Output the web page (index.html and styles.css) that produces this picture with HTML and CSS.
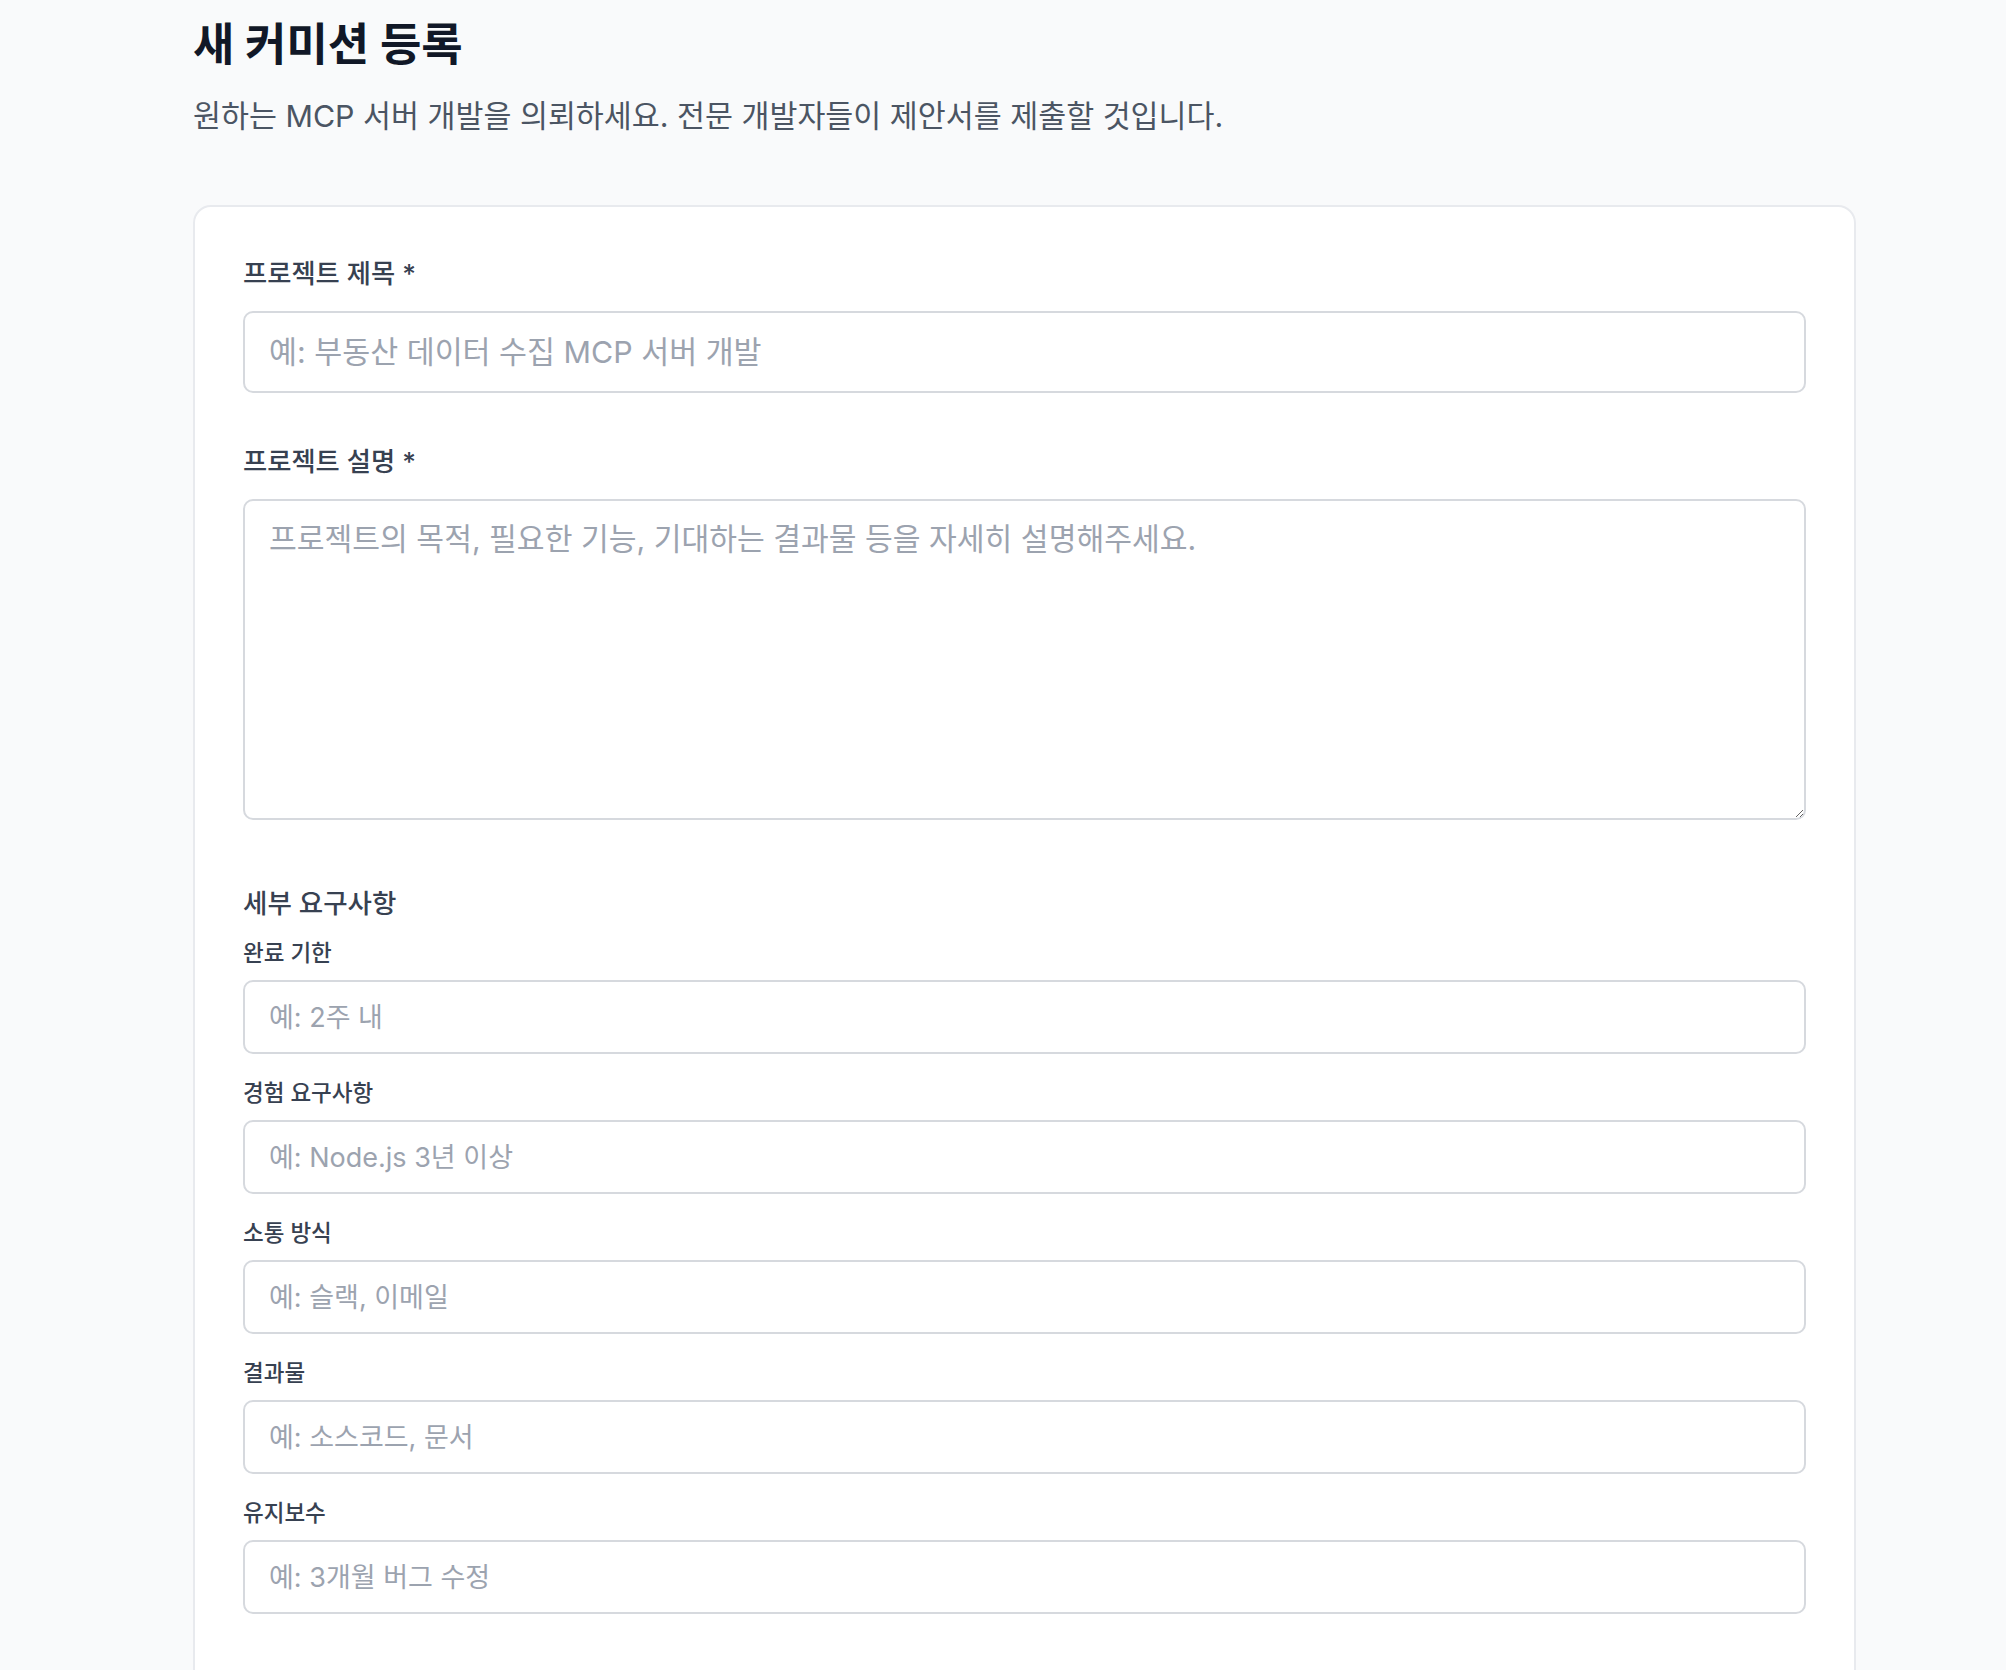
FILE: index.html
```html
<!DOCTYPE html>
<html lang="ko">
<head>
<meta charset="utf-8">
<title>새 커미션 등록</title>
<link rel="stylesheet" href="styles.css">
</head>
<body>
<main class="page">
  <h1 class="title">새 커미션 등록</h1>
  <p class="subtitle">원하는 MCP 서버 개발을 의뢰하세요. 전문 개발자들이 제안서를 제출할 것입니다.</p>

  <form class="card">
    <div class="field field-main">
      <label class="label" for="title">프로젝트 제목 *</label>
      <input class="input input-lg" id="title" type="text" placeholder="예: 부동산 데이터 수집 MCP 서버 개발">
    </div>

    <div class="field field-main">
      <label class="label" for="desc">프로젝트 설명 *</label>
      <textarea class="input textarea" id="desc" placeholder="프로젝트의 목적, 필요한 기능, 기대하는 결과물 등을 자세히 설명해주세요."></textarea>
    </div>

    <section class="details">
      <h2 class="details-title">세부 요구사항</h2>
      <div class="details-list">
        <div class="field">
          <label class="sublabel" for="deadline">완료 기한</label>
          <input class="input input-sm" id="deadline" type="text" placeholder="예: 2주 내">
        </div>
        <div class="field">
          <label class="sublabel" for="exp">경험 요구사항</label>
          <input class="input input-sm" id="exp" type="text" placeholder="예: Node.js 3년 이상">
        </div>
        <div class="field">
          <label class="sublabel" for="comm">소통 방식</label>
          <input class="input input-sm" id="comm" type="text" placeholder="예: 슬랙, 이메일">
        </div>
        <div class="field">
          <label class="sublabel" for="out">결과물</label>
          <input class="input input-sm" id="out" type="text" placeholder="예: 소스코드, 문서">
        </div>
        <div class="field">
          <label class="sublabel" for="maint">유지보수</label>
          <input class="input input-sm" id="maint" type="text" placeholder="예: 3개월 버그 수정">
        </div>
      </div>
    </section>
  </form>
</main>
</body>
</html>
```

FILE: styles.css
```css
* {
  box-sizing: border-box;
}

html, body {
  margin: 0;
  padding: 0;
  background: #f9fafb;
}

body {
  font-family: Inter, "Noto Sans CJK KR", "Noto Sans", sans-serif;
  color: #111827;
}

.page {
  width: 1663px;
  margin-left: 193px;
  padding-top: 21px;
}

.title {
  margin: 0;
  font-size: 45px;
  line-height: 48px;
  font-weight: 700;
  color: #111827;
}

.subtitle {
  margin: 29px 0 0;
  font-size: 30.4px;
  line-height: 36px;
  font-weight: 400;
  color: #4b5563;
}

.card {
  margin-top: 71px;
  background: #ffffff;
  border: 2px solid #e8eaee;
  border-radius: 18px;
  padding: 52px 48px 120px;
  display: flex;
  flex-direction: column;
}

.field {
  display: flex;
  flex-direction: column;
}

.field-main + .field-main {
  margin-top: 54px;
}

.label {
  font-size: 26.3px;
  line-height: 30px;
  font-weight: 500;
  color: #374151;
  margin-bottom: 22px;
}

.input {
  width: 100%;
  border: 2px solid #d6d9de;
  border-radius: 10px;
  background: #ffffff;
  font-family: Inter, "Noto Sans CJK KR", "Noto Sans", sans-serif;
  color: #111827;
  padding: 0 24px;
  outline: none;
}

.input::placeholder {
  color: #9ca3af;
  opacity: 1;
}

.input-lg {
  height: 82px;
  font-size: 30.4px;
}

.textarea {
  height: 321px;
  font-size: 30.2px;
  line-height: 36px;
  padding-top: 20px;
  padding-bottom: 20px;
  resize: vertical;
  display: block;
}

.details {
  margin-top: 65px;
}

.details-title {
  margin: 0;
  font-size: 26.5px;
  line-height: 36px;
  font-weight: 500;
  color: #374151;
}

.details-list {
  margin-top: 17px;
  display: flex;
  flex-direction: column;
  gap: 24px;
}

.sublabel {
  font-size: 22.5px;
  line-height: 30px;
  font-weight: 500;
  color: #374151;
  margin-bottom: 12px;
}

.input-sm {
  height: 74px;
  font-size: 27px;
}
```
